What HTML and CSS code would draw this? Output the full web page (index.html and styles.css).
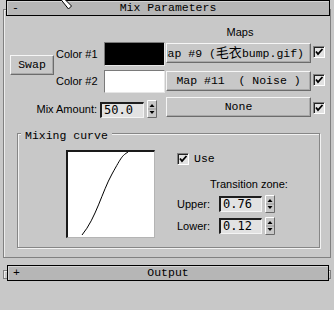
FILE: index.html
```html
<!DOCTYPE html>
<html>
<head>
<meta charset="utf-8">
<link rel="stylesheet" href="styles.css">
</head>
<body>
<div class="rollout main">
  <div class="rhead mono"><span class="sign">-</span><span class="ttl">Mix Parameters</span><span></span></div>
  <div class="params">
    <div class="maps-h">Maps</div>
    <button class="raised swap mono">Swap</button>
    <div class="lbl r1">Color #1</div>
    <div class="swatch s1"></div>
    <div class="raised mapbtn m1 mono"><span>Map #9 (<span class="cjk">毛衣</span>bump.gif)</span></div>
    <span class="chk k1"><svg viewBox="0 0 10 10" width="10" height="10"><polyline points="2,4.5 4,7 8.5,2" fill="none" stroke="#000" stroke-width="1.8"/></svg></span>

    <div class="lbl r2">Color #2</div>
    <div class="swatch s2"></div>
    <div class="raised mapbtn m2 mono">Map #11  ( Noise )</div>
    <span class="chk k2"><svg viewBox="0 0 10 10" width="10" height="10"><polyline points="2,4.5 4,7 8.5,2" fill="none" stroke="#000" stroke-width="1.8"/></svg></span>

    <div class="mixlbl">Mix Amount:</div>
    <div class="spin">
      <div class="num">50.0</div>
      <svg class="arrows" viewBox="0 0 10 18" width="10" height="18"><rect x="0" y="0" width="10" height="18" fill="#c8c8c8"/><path d="M0.5 17.5V0.5H9.5" stroke="#fff" fill="none"/><path d="M0.5 17.5H9.5V0.5" stroke="#6a6a6a" fill="none"/><path d="M1 9H9" stroke="#9a9a9a"/><polygon points="2.5,7 7.5,7 5,4" fill="#000"/><polygon points="2.5,11 7.5,11 5,14" fill="#000"/></svg>
    </div>
    <div class="raised mapbtn m3 mono">None</div>
    <span class="chk k3"><svg viewBox="0 0 10 10" width="10" height="10"><polyline points="2,4.5 4,7 8.5,2" fill="none" stroke="#000" stroke-width="1.8"/></svg></span>
  </div>

  <div class="group">
    <div class="gtitle mono">Mixing curve</div>
    <div class="gbody">
      <div class="curve">
        <svg viewBox="0 0 86 85" width="86" height="85"><path d="M14,83 C28,66 34,40 44,22 S54,4 60,0" fill="none" stroke="#000" stroke-width="1"/></svg>
      </div>
      <div class="gright">
        <div class="use"><span class="chk"><svg viewBox="0 0 10 10" width="10" height="10"><polyline points="2,4.5 4,7 8.5,2" fill="none" stroke="#000" stroke-width="1.8"/></svg></span><span class="mono">Use</span></div>
        <div class="trans">Transition zone:</div>
        <div class="zrow">
          <span class="zlbl">Upper:</span>
          <div class="num">0.76</div>
          <svg class="arrows" viewBox="0 0 10 18" width="10" height="18"><rect x="0" y="0" width="10" height="18" fill="#c8c8c8"/><path d="M0.5 17.5V0.5H9.5" stroke="#fff" fill="none"/><path d="M0.5 17.5H9.5V0.5" stroke="#6a6a6a" fill="none"/><path d="M1 9H9" stroke="#9a9a9a"/><polygon points="2.5,7 7.5,7 5,4" fill="#000"/><polygon points="2.5,11 7.5,11 5,14" fill="#000"/></svg>
        </div>
        <div class="zrow">
          <span class="zlbl">Lower:</span>
          <div class="num">0.12</div>
          <svg class="arrows" viewBox="0 0 10 18" width="10" height="18"><rect x="0" y="0" width="10" height="18" fill="#c8c8c8"/><path d="M0.5 17.5V0.5H9.5" stroke="#fff" fill="none"/><path d="M0.5 17.5H9.5V0.5" stroke="#6a6a6a" fill="none"/><path d="M1 9H9" stroke="#9a9a9a"/><polygon points="2.5,7 7.5,7 5,4" fill="#000"/><polygon points="2.5,11 7.5,11 5,14" fill="#000"/></svg>
        </div>
      </div>
    </div>
  </div>
</div>

<div class="rollout out">
  <div class="rhead mono"><span class="sign">+</span><span class="ttl">Output</span><span></span></div>
</div>

<svg class="cursor" viewBox="0 0 13 10" width="13" height="10"><polygon points="0.5,-1 4.5,-1 11.5,6 8.5,9" fill="#fff" stroke="#000" stroke-width="1"/></svg>
</body>
</html>
```

FILE: styles.css
```css
* { box-sizing: border-box; }

body {
  margin: 0;
  width: 334px;
  height: 310px;
  overflow: hidden;
  position: relative;
  background: #c8c8c8;
  color: #000;
  font-family: "Liberation Sans", Arial, sans-serif;
  font-size: 11px;
}

.mono {
  font-family: "Liberation Mono", "Noto Sans CJK SC", monospace;
  font-size: 11.5px;
}

.cjk {
  font-family: "Noto Sans CJK SC", sans-serif;
  font-size: 13px;
}

.rollout {
  display: flow-root;
  margin: 0 3px 0 3px;
  border: 1px solid #808080;
  box-shadow: inset 1px 1px 0 #ececec;
}

.rollout.main {
  margin-top: 9px;
  padding-bottom: 9px;
}

.rhead {
  display: grid;
  grid-template-columns: 1fr auto 1fr;
  align-items: center;
  height: 16px;
  border: 1px solid #000;
  background: #b6b6b6;
  box-shadow: inset 1px 1px 0 #d4d4d4;
  line-height: 14px;
}

.rhead .sign { padding-left: 5px; }

.main > .rhead {
  margin: -10px 0 0 2px;
  width: 324px;
}

.params {
  display: grid;
  grid-template-columns: 52px 44px 65px 146px 18px;
  grid-template-rows: 26px 28px 27px 21px;
}

.maps-h {
  grid-column: 4;
  grid-row: 1;
  align-self: end;
  text-align: center;
  line-height: 13px;
  padding: 0 0 3px 4px;
}

.raised {
  background: #c8c8c8;
  border: 1px solid;
  border-color: #f6f6f6 #6c6c6c #6c6c6c #f6f6f6;
  box-shadow: inset -1px -1px 0 #a8a8a8;
  color: #000;
}

.swap {
  grid-column: 1;
  grid-row: 2 / 4;
  align-self: start;
  margin: 13px 0 0 6px;
  width: 44px;
  height: 20px;
  padding: 0;
  line-height: 16px;
}

.lbl {
  grid-column: 2;
  align-self: start;
  text-align: right;
  white-space: nowrap;
  padding-right: 3px;
}
.lbl.r1 { grid-row: 2; line-height: 24px; }
.lbl.r2 { grid-row: 3; line-height: 23px; }

.swatch {
  grid-column: 3;
  align-self: start;
  margin-left: 4px;
  width: 61px;
  border: 1px solid;
  border-color: #7a7a7a #e6e6e6 #e6e6e6 #7a7a7a;
}
.swatch.s1 { grid-row: 2; height: 24px; background: #000; }
.swatch.s2 { grid-row: 3; height: 23px; background: #fff; }

.mapbtn {
  grid-column: 4;
  align-self: start;
  margin-left: 1px;
  width: 145px;
  height: 20px;
  display: flex;
  align-items: center;
  justify-content: center;
  overflow: hidden;
  white-space: pre;
  line-height: 14px;
}
.mapbtn.m1 { grid-row: 2; margin-top: 1px; justify-content: flex-end; padding-right: 6px; }
.mapbtn.m2 { grid-row: 3; margin-top: 1px; }
.mapbtn.m3 { grid-row: 4; }

.chk {
  display: block;
  width: 12px;
  height: 12px;
  border: 1px solid;
  border-color: #808080 #fff #fff #808080;
  box-shadow: inset 1px 1px 0 #222;
  background: #e2e2e2;
}
.chk svg { display: block; }

.params .chk { grid-column: 5; align-self: start; margin-left: 2px; }
.chk.k1 { grid-row: 2; margin-top: 4px; }
.chk.k2 { grid-row: 3; margin-top: 4px; }
.chk.k3 { grid-row: 4; margin-top: 5px; }

.mixlbl {
  grid-column: 1 / 3;
  grid-row: 4;
  align-self: start;
  margin-top: 6px;
  line-height: 13px;
  text-align: right;
  padding-right: 3px;
}

.spin {
  grid-column: 3;
  grid-row: 4;
  display: flex;
  align-items: flex-start;
  gap: 3px;
}

.num {
  width: 44px;
  height: 16px;
  margin-top: 5px;
  padding-left: 2px;
  background: #e2e2e2;
  border: 1px solid;
  border-width: 2px 1px 1px 2px;
  border-color: #1e1e1e #f4f4f4 #f4f4f4 #1e1e1e;
  font-family: "DejaVu Sans Mono", monospace;
  font-size: 12px;
  line-height: 12px;
}

.arrows {
  display: block;
  margin-top: 3px;
}

.group {
  margin: 15px 0 0 13px;
  width: 303px;
  height: 115px;
  border: 1px solid #868686;
  box-shadow: inset 1px 1px 0 #f2f2f2, 1px 1px 0 #f2f2f2;
}

.gtitle {
  width: max-content;
  margin: -5px 0 0 3px;
  padding: 0 4px;
  background: #c8c8c8;
  line-height: 14px;
}

.gbody {
  display: flex;
  align-items: flex-start;
  margin-top: 7px;
  padding-left: 48px;
}

.curve {
  width: 89px;
  height: 88px;
  background: #fff;
  border-style: solid;
  border-width: 2px 1px 1px 2px;
  border-color: #1a1a1a #b4b4b4 #b4b4b4 #1a1a1a;
}
.curve svg { display: block; }

.gright { margin-left: 22px; }

.use {
  display: flex;
  align-items: center;
  gap: 5px;
  margin-top: 2px;
  height: 13px;
  line-height: 13px;
}

.trans {
  margin-top: 13px;
  padding-left: 33px;
  line-height: 13px;
  white-space: nowrap;
}

.zrow {
  display: flex;
  align-items: flex-start;
  margin-top: 4px;
  height: 18px;
}
.zlbl { width: 42px; line-height: 18px; }
.zrow .num { width: 43px; margin-top: 1px; }
.zrow .arrows { margin: 0 0 0 3px; }

.rollout.out {
  margin-top: 12px;
  height: 9px;
}
.out > .rhead {
  margin: -6px 0 0 3px;
  width: 322px;
}

.cursor {
  position: absolute;
  left: 60px;
  top: 0;
}
```
